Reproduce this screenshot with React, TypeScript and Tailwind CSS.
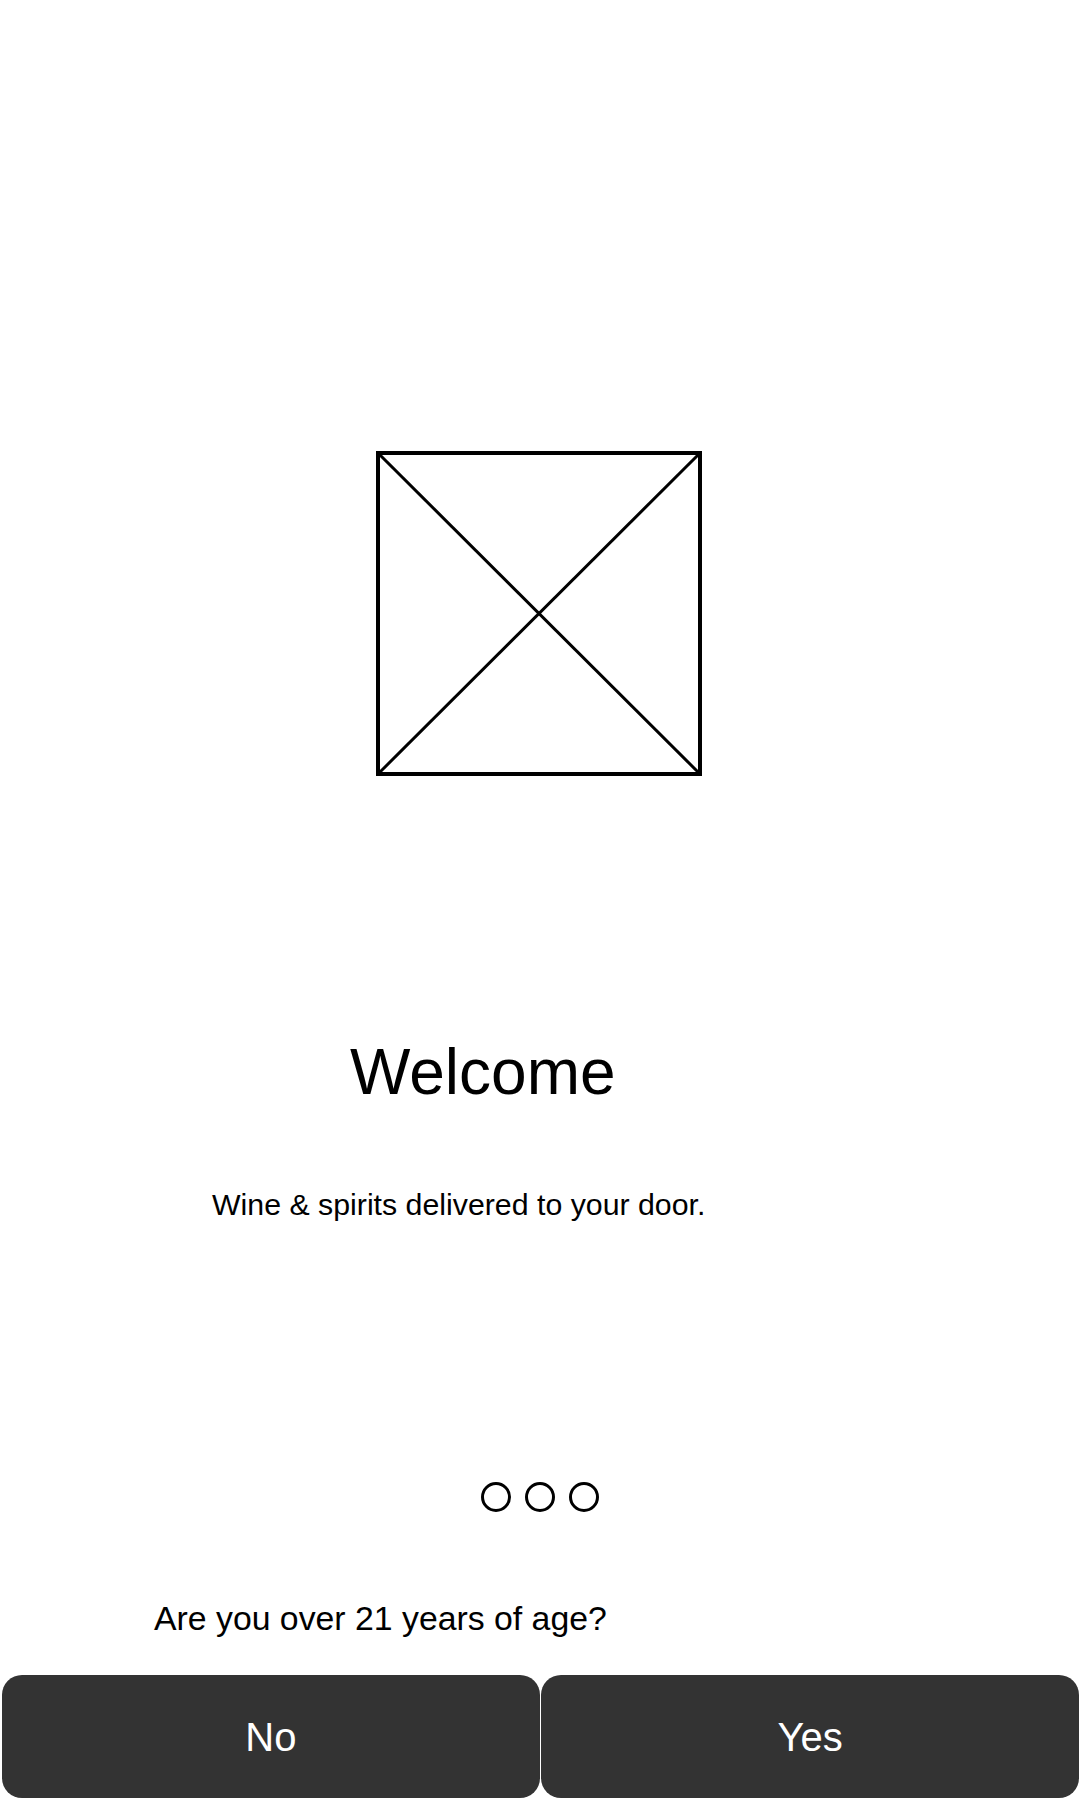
import React from "react";

export default function App() {
  return (
    <div
      className="w-[1080px] h-[1800px] bg-white flex flex-col text-black overflow-hidden"
      style={{ fontFamily: '"Liberation Sans", Arial, sans-serif' }}
    >
      <div className="pt-[451px] pl-[376px]">
        <svg width="326" height="325" viewBox="0 0 326 325" className="block">
          <rect x="2" y="2" width="322" height="321" fill="none" stroke="#000" strokeWidth="4" />
          <line x1="2" y1="2" x2="324" y2="323" stroke="#000" strokeWidth="3" />
          <line x1="324" y1="2" x2="2" y2="323" stroke="#000" strokeWidth="3" />
        </svg>
      </div>

      <h1 className="mt-[264px] pl-[350px] text-[64px] leading-none font-normal">Welcome</h1>

      <p className="mt-[86px] pl-[212px] text-[30.3px] leading-none">
        Wine &amp; spirits delivered to your door.
      </p>

      <div className="mt-[262px] flex justify-center gap-[14px]">
        <span className="w-[30px] h-[30px] rounded-full border-[3px] border-black" />
        <span className="w-[30px] h-[30px] rounded-full border-[3px] border-black" />
        <span className="w-[30px] h-[30px] rounded-full border-[3px] border-black" />
      </div>

      <p className="mt-[90px] pl-[154px] text-[33.8px] leading-none">Are you over 21 years of age?</p>

      <div className="mt-[39px] flex pl-[2px] pr-[1px] gap-[1.5px]">
        <button className="flex-1 h-[123px] rounded-[20px] bg-[#333333] text-white text-[40px] leading-none flex items-center justify-center">
          No
        </button>
        <button className="flex-1 h-[123px] rounded-[20px] bg-[#333333] text-white text-[40px] leading-none flex items-center justify-center">
          Yes
        </button>
      </div>
    </div>
  );
}
